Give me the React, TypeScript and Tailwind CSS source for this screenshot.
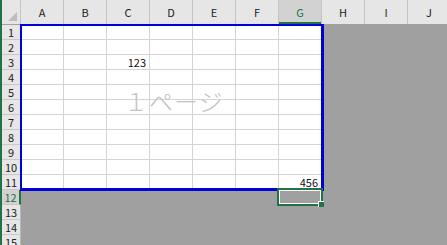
import React from 'react';

const COLS = ['A', 'B', 'C', 'D', 'E', 'F', 'G', 'H', 'I', 'J'];
const ROWS = Array.from({ length: 15 }, (_, i) => i + 1);

const font = { fontFamily: '"Noto Sans CJK JP", "Liberation Sans", sans-serif' };

// values in the sheet, keyed by cell address
const VALUES: Record<string, string> = { C3: '123', G11: '456' };

const ColumnHeader = ({ name }: { name: string }) => {
  const selected = name === 'G';
  return (
    <div
      className={`flex h-full w-[43px] shrink-0 flex-col border-r border-[#c4c4c4] ${
        selected ? 'bg-[#d2d2d2] text-[#217346]' : 'text-[#222]'
      }`}
    >
      <span className="flex flex-1 items-center justify-center pt-[2px] text-[11px] leading-none">{name}</span>
      <div className={`h-[2px] ${selected ? 'bg-[#217346]' : ''}`}></div>
    </div>
  );
};

const RowHeader = ({ n }: { n: number }) => {
  const selected = n === 12;
  return (
    <div
      className={`flex h-full w-[19px] shrink-0 items-center justify-center border-b border-[#c8c8c8] text-[11px] leading-none ${
        selected ? 'border-r-2 border-r-[#217346] bg-[#d2d2d2] text-[#217346]' : 'border-r border-r-[#b8b8b8] bg-[#e6e6e6] text-[#222]'
      }`}
    >
      {n}
    </div>
  );
};

const Cell = ({ row, col, index }: { row: number; col: string; index: number }) => {
  const inPrint = row <= 11 && index <= 6;
  if (!inPrint) {
    return <div className="h-full w-[43px] shrink-0"></div>;
  }
  return (
    <div className="flex h-full w-[43px] shrink-0 items-center justify-end border-r border-b border-[#d4d4d4] bg-white pr-[3px] text-[11px] leading-none text-[#111]">
      {VALUES[`${col}${row}`]}
    </div>
  );
};

export default function App() {
  return (
    <div className="relative flex h-[245px] w-[447px] overflow-hidden bg-[#a0a0a0]" style={font}>
      <div className="w-[2px] shrink-0 bg-[#217346]"></div>
      <div className="flex min-w-0 flex-col">
        {/* column headers */}
        <div className="flex h-[25px] shrink-0 border-b border-[#a0a0a0] bg-[#e6e6e6]">
          <div className="relative h-full w-[19px] shrink-0 border-r border-[#c4c4c4]">
            <div className="absolute right-[3px] bottom-[3px] h-0 w-0 border-b-[9px] border-l-[9px] border-b-[#bcbcbc] border-l-transparent"></div>
          </div>
          {COLS.map((c) => (
            <ColumnHeader key={c} name={c} />
          ))}
        </div>
        {ROWS.map((r) => (
          <div key={r} className="flex h-[15px] shrink-0">
            <RowHeader n={r} />
            {COLS.map((c, i) => (
              <Cell key={c} row={r} col={c} index={i} />
            ))}
          </div>
        ))}
      </div>

      {/* page watermark */}
      <div className="pointer-events-none absolute top-[86px] left-[124px] text-[24px] leading-[30px] font-light tracking-[1px] text-[#c2c2c2]">
        １ページ
      </div>

      {/* print area border */}
      <div className="pointer-events-none absolute top-[24px] left-[20px] h-[167px] w-[304px] border-t-2 border-r-[3px] border-b-[3px] border-l-2 border-[#0000d8]"></div>

      {/* active cell G12 */}
      <div className="pointer-events-none absolute top-[188px] left-[277px] h-[18px] w-[46px] border-2 border-[#217346]">
        <div className="h-full w-full border border-white"></div>
        <div className="absolute -right-[3px] -bottom-[3px] h-[6px] w-[6px] border-t border-l border-white bg-[#217346]"></div>
      </div>
    </div>
  );
}
